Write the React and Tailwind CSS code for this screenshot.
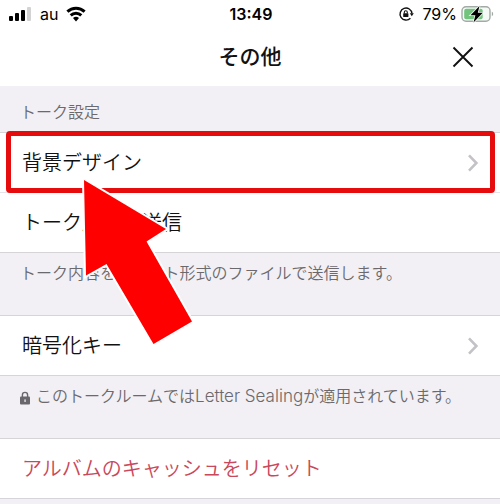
import React from "react";

const SignalIcon = () => (
  <svg viewBox="0 0 24 16" className="w-6 h-4" aria-hidden="true">
    <rect x="1" y="10" width="4" height="5" rx="1" fill="#000" />
    <rect x="7" y="7" width="4" height="8" rx="1" fill="#000" />
    <rect x="13" y="4" width="4" height="11" rx="1" fill="#000" />
    <rect x="19" y="1" width="4" height="14" rx="1" fill="#d3d3d3" />
  </svg>
);

const WifiIcon = () => (
  <svg viewBox="0 0 20 16" className="w-5 h-4" fill="none" stroke="#000" strokeWidth="3" aria-hidden="true">
    <path d="M1.4 5.6a12.4 12.4 0 0 1 17.2 0" />
    <path d="M4.7 9.3a7.7 7.7 0 0 1 10.6 0" />
    <path d="M10 15.4l-3-3.3a4.3 4.3 0 0 1 6 0z" fill="#000" stroke="none" />
  </svg>
);

const RotationLockIcon = () => (
  <svg viewBox="0 0 16 16" className="w-4 h-4" fill="none" stroke="#111" aria-hidden="true">
    <path d="M12.4 12.2a6 6 0 1 1 1.6-4.7" strokeWidth="1.4" />
    <path d="M11.8 7.2h4l-2 3z" fill="#111" stroke="none" />
    <rect x="5.2" y="7.2" width="5.2" height="3.9" rx="0.6" fill="#111" stroke="none" />
    <path d="M6.3 7.4V6.2a1.5 1.5 0 0 1 3 0v1.2" strokeWidth="1.1" />
  </svg>
);

const BatteryIcon = () => (
  <svg viewBox="0 0 33 18" className="w-[33px] h-[18px]" aria-hidden="true">
    <rect x="1" y="1.7" width="28" height="14.6" rx="4" fill="#f4fbf6" stroke="#a3aaa6" strokeWidth="1.4" />
    <rect x="3.2" y="3.8" width="18.5" height="10.4" rx="2" fill="#72c47d" />
    <path d="M30.8 6.8c1.8.6 1.8 3.8 0 4.4z" fill="#a3aaa6" />
    <path d="M18.5 1L9.5 10.3h4.9l-1.9 7.1 9.3-9.7h-5z" fill="#000" stroke="#f4fbf6" strokeWidth="1.6" paintOrder="stroke" />
  </svg>
);

const CloseIcon = () => (
  <svg viewBox="0 0 22 22" className="w-[22px] h-[22px]" fill="none" stroke="#111" strokeWidth="1.9" aria-hidden="true">
    <path d="M1.5 1.5l19 19M20.5 1.5l-19 19" />
  </svg>
);

const ChevronIcon = () => (
  <svg viewBox="0 0 12 18" className="w-3 h-[18px]" fill="none" stroke="#c4c2c6" strokeWidth="2.6" aria-hidden="true">
    <path d="M2 1.3L9.4 9 2 16.7" />
  </svg>
);

const LockIcon = () => (
  <svg viewBox="0 0 10 14" className="w-[10px] h-[14px]" aria-hidden="true">
    <path d="M2.4 6.5V4a2.6 2.6 0 0 1 5.2 0v2.5" fill="none" stroke="#69676b" strokeWidth="1.4" />
    <rect x="0" y="5.6" width="10" height="7.8" rx="1" fill="#69676b" />
    <rect x="4.4" y="8.2" width="1.3" height="2.8" rx="0.6" fill="#f2f0f4" />
  </svg>
);

const ArrowPointer = () => (
  <svg
    viewBox="0 0 116 172"
    className="absolute left-[80px] top-[43px] z-10 w-[116px] h-[172px] pointer-events-none"
    aria-hidden="true"
  >
    <path
      d="M4 4L86 53 66.5 65.5 112 145.5 73.5 168 26.5 88 6 99.5z"
      fill="#fe0000"
      stroke="#fff"
      strokeWidth="4"
      paintOrder="stroke"
    />
  </svg>
);

const Row = ({ label, chevron, danger }) => (
  <button
    className={
      danger
        ? "flex h-[59px] w-full items-center justify-between pl-[22px] pr-[21px] text-left text-xl font-[350] text-[#c9485b]"
        : "flex h-[59px] w-full items-center justify-between pl-[22px] pr-[21px] text-left text-xl font-[350] text-[#111]"
    }
  >
    <span>{label}</span>
    {chevron && <ChevronIcon />}
  </button>
);

const Note = ({ children }) => (
  <p className="flex h-16 items-start gap-1.5 border-y border-[#d6d4d9] px-5 pt-2 text-base font-[350] text-[#6b696d]">
    {children}
  </p>
);

const App = () => {
  return (
    <div className="min-h-screen bg-[#f2f0f4] font-['Inter','Noto_Sans_CJK_JP',sans-serif]">
      <header className="bg-white">
        <div className="grid h-7 grid-cols-[1fr_auto_1fr] items-center pl-2 pr-1.5">
          <div className="flex items-center gap-2">
            <SignalIcon />
            <span className="text-base">au</span>
            <WifiIcon />
          </div>
          <time className="text-base font-semibold">13:49</time>
          <div className="flex items-center justify-end gap-1">
            <RotationLockIcon />
            <span className="pl-1 text-base">79%</span>
            <BatteryIcon />
          </div>
        </div>
        <div className="grid h-[58px] grid-cols-[1fr_auto_1fr] items-center pr-[26px]">
          <h1 className="col-start-2 pl-[26px] text-[21px] font-medium text-[#111]">その他</h1>
          <button aria-label="閉じる" className="justify-self-end">
            <CloseIcon />
          </button>
        </div>
      </header>

      <main>
        <h2 className="flex h-[47px] items-center border-b border-[#d6d4d9] px-5 pt-1.5 text-base font-[350] text-[#6b696d]">
          トーク設定
        </h2>
        <div className="relative bg-white">
          <Row label="背景デザイン" chevron />
          <div className="absolute -top-0.5 left-1.5 right-[5px] h-[62px] rounded-sm border-5 border-[#e60b0d] pointer-events-none" />
          <ArrowPointer />
        </div>
        <div className="border-t border-[#e6e4e8] bg-white">
          <Row label="トーク履歴を送信" />
        </div>
        <Note>トーク内容をテキスト形式のファイルで送信します。</Note>
        <div className="bg-white">
          <Row label="暗号化キー" chevron />
        </div>
        <Note>
          <span className="flex h-6 items-center pt-1">
            <LockIcon />
          </span>
          <span>
            このトークルームでは<span className="text-[17px]">Letter Sealing</span>が適用されています。
          </span>
        </Note>
        <div className="border-b border-[#d6d4d9] bg-white">
          <Row label="アルバムのキャッシュをリセット" danger />
        </div>
      </main>
    </div>
  );
};

export default App;
